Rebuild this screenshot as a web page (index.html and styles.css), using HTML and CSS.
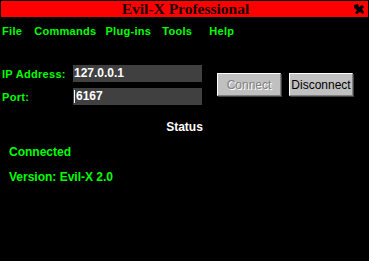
FILE: index.html
```html
<!DOCTYPE html>
<html lang="en">
<head>
  <meta charset="UTF-8" />
  <title>Evil-X Professional</title>
  <link rel="stylesheet" href="styles.css">
</head>
<body>
  <div class="titlebar">
    <span class="title">Evil-X Professional</span>
    <svg class="close" width="11" height="11" viewBox="0 0 11 11">
      <path d="M0 1 L4 0 L5 3 L8 1 L10 3 L8 5 L10 8 L9 10 L6 8 L3 10 L1 9 L3 6 L0 4 Z" fill="#000"/>
    </svg>
  </div>

  <div class="menubar">
    <a href="#">File</a>
    <a href="#">Commands</a>
    <a href="#">Plug-ins</a>
    <a href="#">Tools</a>
    <a href="#">Help</a>
  </div>

  <div class="panel">
    <div class="fields">
      <label>IP Address:</label>
      <div class="field">127.0.0.1</div>
      <label>Port:</label>
      <div class="field"><span class="caret"></span>6167</div>
    </div>
    <div class="buttons">
      <button class="btn" disabled>Connect</button>
      <button class="btn">Disconnect</button>
    </div>
  </div>

  <h3 class="status-title">Status</h3>
  <div class="status">
    <div class="status-line">Connected</div>
    <div class="status-line">Version: Evil-X 2.0</div>
  </div>
</body>
</html>
```

FILE: styles.css
```css
body {
  background-color: #000;
  color: #0f0;
  font-family: "Liberation Sans", Arial, sans-serif;
  font-size: 12px;
  font-weight: bold;
  margin: 0;
  width: 369px;
  height: 261px;
  overflow: hidden;
}

.titlebar {
  position: relative;
  margin: 1px 1px 0;
  height: 16px;
  background: #f00;
  display: flex;
  justify-content: center;
  align-items: center;
}
.title {
  font-family: "Liberation Serif", "Times New Roman", serif;
  font-size: 15.5px;
  font-weight: bold;
  color: #1a0000;
  line-height: 16px;
  padding-left: 2px;
}
.close {
  position: absolute;
  right: 3px;
  top: 3px;
}

.menubar {
  display: flex;
  margin-top: 7px;
  padding-left: 2px;
  line-height: 14px;
  font-size: 11px;
  letter-spacing: 0.3px;
}
.menubar a {
  color: #0f0;
  text-decoration: none;
  margin-right: 11px;
}
.menubar a:nth-child(1) {
  margin-right: 12px;
}
.menubar a:nth-child(2) {
  margin-right: 9px;
}
.menubar a:nth-child(4) {
  margin-right: 17px;
}

.panel {
  display: flex;
  margin-top: 27px;
  padding-left: 2px;
}
.fields {
  display: grid;
  grid-template-columns: 71px 129px;
  row-gap: 6px;
  align-items: center;
}
.fields label {
  color: #0f0;
  font-size: 11px;
  letter-spacing: 0.3px;
}
.field {
  background: #404040;
  color: #fff;
  height: 17px;
  line-height: 17px;
  padding-left: 1px;
  display: flex;
  align-items: center;
}
.caret {
  width: 1px;
  height: 13px;
  background: #fff;
  margin-right: 1px;
}

.buttons {
  display: flex;
  gap: 8px;
  margin-left: 15px;
  margin-top: 8px;
  align-items: flex-start;
}
.btn {
  width: 64px;
  height: 23px;
  padding: 0;
  background: #c0c0c0;
  color: #000;
  font-family: "Liberation Sans", Arial, sans-serif;
  font-size: 12px;
  font-weight: normal;
  border: 1px solid;
  border-color: #fff #808080 #808080 #fff;
  box-shadow: 1px 1px 0 #404040;
}
.btn:disabled {
  color: #808080;
  text-shadow: 1px 1px 0 #fff;
}

.status-title {
  text-align: center;
  color: #fff;
  font-size: 12px;
  margin: 15px 0 0;
  line-height: 14px;
}
.status {
  padding-left: 9px;
  margin-top: 11px;
}
.status-line {
  line-height: 14px;
  margin-bottom: 11px;
}
```
